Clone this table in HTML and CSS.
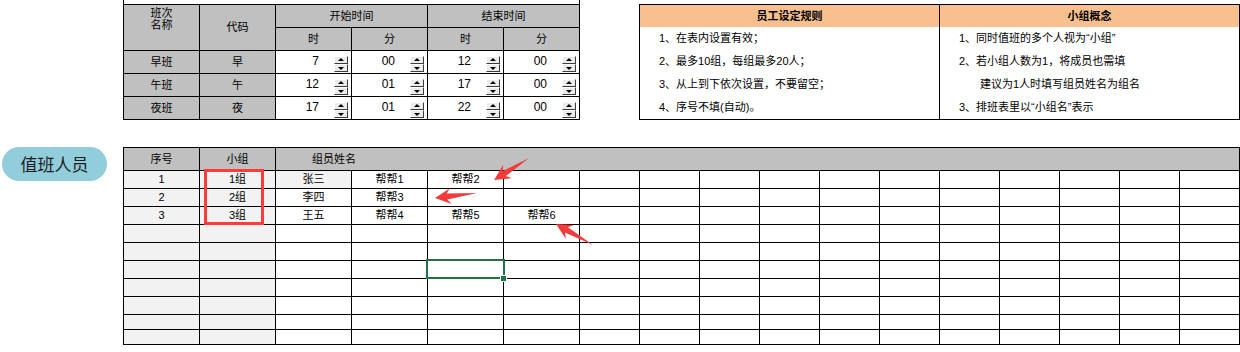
FILE: index.html
```html
<!DOCTYPE html>
<html lang="zh-CN">
<head>
<meta charset="utf-8">
<title>排班设置</title>
<link rel="stylesheet" href="styles.css">
</head>
<body>
<div class="top">
  <div class="shift-wrap">
    <div class="stub"></div>
    <div class="shift">
      <div class="two">班次<br>名称</div>
      <div class="tall">代码</div>
      <div class="wide">开始时间</div>
      <div class="wide">结束时间</div>
      <div>时</div><div>分</div><div>时</div><div>分</div>

      <div>早班</div><div>早</div>
      <div class="v"><span>7</span><span class="spin"><i class="up"></i><i class="dn"></i></span></div>
      <div class="v"><span>00</span><span class="spin"><i class="up"></i><i class="dn"></i></span></div>
      <div class="v"><span>12</span><span class="spin"><i class="up"></i><i class="dn"></i></span></div>
      <div class="v"><span>00</span><span class="spin"><i class="up"></i><i class="dn"></i></span></div>

      <div>午班</div><div>午</div>
      <div class="v"><span>12</span><span class="spin"><i class="up"></i><i class="dn"></i></span></div>
      <div class="v"><span>01</span><span class="spin"><i class="up"></i><i class="dn"></i></span></div>
      <div class="v"><span>17</span><span class="spin"><i class="up"></i><i class="dn"></i></span></div>
      <div class="v"><span>00</span><span class="spin"><i class="up"></i><i class="dn"></i></span></div>

      <div>夜班</div><div>夜</div>
      <div class="v"><span>17</span><span class="spin"><i class="up"></i><i class="dn"></i></span></div>
      <div class="v"><span>01</span><span class="spin"><i class="up"></i><i class="dn"></i></span></div>
      <div class="v"><span>22</span><span class="spin"><i class="up"></i><i class="dn"></i></span></div>
      <div class="v"><span>00</span><span class="spin"><i class="up"></i><i class="dn"></i></span></div>
    </div>
  </div>

  <div class="rules">
    <div class="hd">员工设定规则</div>
    <div class="hd">小组概念</div>
    <div class="bd">
      <p>1、在表内设置有效；</p>
      <p>2、最多10组，每组最多20人；</p>
      <p>3、从上到下依次设置，不要留空；</p>
      <p>4、序号不填(自动)。</p>
    </div>
    <div class="bd">
      <p>1、同时值班的多个人视为“小组”</p>
      <p>2、若小组人数为1，将成员也需填</p>
      <p class="indent">建议为1人时填写组员姓名为组名</p>
      <p>3、排班表里以“小组名”表示</p>
    </div>
  </div>
</div>

<div class="duty">
  <div class="pill">值班人员</div>
  <div class="roster">
    <div class="h">序号</div><div class="h">小组</div><div class="h names">组员姓名</div>

    <div class="g">1</div><div class="g">1组</div><div class="g">张三</div><div>帮帮1</div><div>帮帮2</div>
    <div></div><div></div><div></div><div></div><div></div><div></div><div></div><div></div><div></div><div></div><div></div><div></div>

    <div class="g">2</div><div class="g">2组</div><div>李四</div><div>帮帮3</div><div></div>
    <div></div><div></div><div></div><div></div><div></div><div></div><div></div><div></div><div></div><div></div><div></div><div></div>

    <div class="g">3</div><div class="g">3组</div><div>王五</div><div>帮帮4</div><div>帮帮5</div>
    <div>帮帮6</div><div></div><div></div><div></div><div></div><div></div><div></div><div></div><div></div><div></div><div></div><div></div>

    <div class="g"></div><div class="g"></div><div></div><div></div><div></div>
    <div></div><div></div><div></div><div></div><div></div><div></div><div></div><div></div><div></div><div></div><div></div><div></div>

    <div class="g"></div><div class="g"></div><div></div><div></div><div></div>
    <div></div><div></div><div></div><div></div><div></div><div></div><div></div><div></div><div></div><div></div><div></div><div></div>

    <div class="g"></div><div class="g"></div><div></div><div></div><div></div>
    <div></div><div></div><div></div><div></div><div></div><div></div><div></div><div></div><div></div><div></div><div></div><div></div>

    <div class="g"></div><div class="g"></div><div></div><div></div><div></div>
    <div></div><div></div><div></div><div></div><div></div><div></div><div></div><div></div><div></div><div></div><div></div><div></div>

    <div class="g"></div><div class="g"></div><div></div><div></div><div></div>
    <div></div><div></div><div></div><div></div><div></div><div></div><div></div><div></div><div></div><div></div><div></div><div></div>

    <div class="g"></div><div class="g"></div><div></div><div></div><div></div>
    <div></div><div></div><div></div><div></div><div></div><div></div><div></div><div></div><div></div><div></div><div></div><div></div>

    <div class="g"></div><div class="g"></div><div></div><div></div><div></div>
    <div></div><div></div><div></div><div></div><div></div><div></div><div></div><div></div><div></div><div></div><div></div><div></div>
  </div>
</div>

<div class="mark"></div>
<div class="sel"></div>
<svg class="arrows" width="1240" height="352" viewBox="0 0 1240 352" aria-hidden="true">
  <polygon points="494,180 511.8,178.2 505.8,176.1 529,158 502.6,171.1 503.3,164.7"/>
  <polygon points="435,198 451.8,204 447.3,199.6 477,193 446.6,193.6 449.9,188.2"/>
  <polygon points="556,224 565.9,238.9 564.9,232.5 593,245 567.9,227.3 573.9,224.9"/>
</svg>
</body>
</html>
```

FILE: styles.css
```css
* { box-sizing: border-box; }

body {
  margin: 0;
  width: 1240px;
  height: 352px;
  overflow: hidden;
  position: relative;
  background: #fff;
  color: #000;
  font: 11px/1.1 "Liberation Sans", "Noto Sans CJK SC", sans-serif;
}

p { margin: 0; }

/* ---------- top area ---------- */
.top {
  display: flex;
  align-items: flex-start;
  gap: 59px;
  padding-left: 123px;
}

.stub {
  width: 457px;
  height: 4px;
  border-left: 1px solid #000;
  border-right: 1px solid #000;
}

.shift {
  display: grid;
  grid-template-columns: repeat(6, 75px);
  grid-template-rows: repeat(5, 22px);
  gap: 1px;
  padding: 1px;
  background: #000;
  width: max-content;
}

.shift > div {
  background: #c0c0c0;
  display: flex;
  align-items: center;
  justify-content: center;
  text-align: center;
}

.shift .two {
  grid-row: span 2;
  align-items: flex-start;
  padding-top: 2px;
  line-height: 12px;
}

.shift .tall { grid-row: span 2; }
.shift .wide { grid-column: span 2; }

.shift .v {
  background: #fff;
  justify-content: flex-end;
  gap: 15px;
  padding-right: 3px;
  font-size: 12px;
}

.spin {
  align-self: flex-end;
  margin-bottom: 1px;
  width: 14px;
  height: 16px;
  display: flex;
  flex-direction: column;
}

.spin i {
  flex: 1;
  position: relative;
  background: #ececec;
  border: 1px solid;
  border-color: #fff #3c3c3c #3c3c3c #fff;
}

.spin i::after {
  content: "";
  position: absolute;
  left: 3px;
  top: 1px;
  border-left: 3px solid transparent;
  border-right: 3px solid transparent;
}

.spin .up::after { border-bottom: 3px solid #000; }
.spin .dn::after { border-top: 3px solid #000; top: 2px; }

/* ---------- rules box ---------- */
.rules {
  margin-top: 4px;
  display: grid;
  grid-template-columns: 299px 299px;
  grid-template-rows: 22px 91px;
  gap: 1px;
  padding: 1px;
  background: #000;
}

.rules .hd {
  background: #f8c08f;
  font-weight: bold;
  display: flex;
  align-items: center;
  justify-content: center;
}

.rules .bd {
  background: #fff;
  padding: 0 0 0 19px;
  margin-top: -1px;
  display: flex;
  flex-direction: column;
}

.rules .bd p {
  height: 23px;
  line-height: 23px;
  white-space: nowrap;
}

.rules .bd .indent { padding-left: 21px; }

/* ---------- duty roster ---------- */
.duty {
  display: flex;
  align-items: flex-start;
  gap: 16px;
  margin-top: 27px;
  padding-left: 2px;
}

.pill {
  width: 105px;
  height: 34px;
  border-radius: 17px;
  background: #92cddc;
  color: #1c1c1c;
  font-family: "Noto Sans CJK SC", sans-serif;
  font-size: 17px;
  display: flex;
  align-items: center;
  justify-content: center;
}

.roster {
  display: grid;
  grid-template-columns: repeat(6, 75px) repeat(11, 59px);
  grid-template-rows: 22px repeat(8, 17px) repeat(2, 14px);
  gap: 1px;
  padding: 1px;
  background: #000;
}

.roster > div {
  background: #fff;
  display: flex;
  align-items: center;
  justify-content: center;
  white-space: nowrap;
}

.roster .h { background: #c0c0c0; }
.roster .g { background: #f2f2f2; }

.roster .names {
  grid-column: span 15;
  justify-content: flex-start;
  padding-left: 36px;
}

/* ---------- overlays ---------- */
.mark {
  position: absolute;
  left: 204px;
  top: 169px;
  width: 60px;
  height: 56px;
  border: 3px solid #ff3b3b;
}

.sel {
  position: absolute;
  left: 426px;
  top: 259px;
  width: 79px;
  height: 20px;
  border: 2px solid #217346;
}

.sel::after {
  content: "";
  position: absolute;
  left: 73px;
  top: 15px;
  width: 5px;
  height: 5px;
  background: #217346;
  outline: 1px solid #fff;
}

.arrows {
  position: absolute;
  left: 0;
  top: 0;
  pointer-events: none;
}

.arrows polygon { fill: #f23b3b; }
```
